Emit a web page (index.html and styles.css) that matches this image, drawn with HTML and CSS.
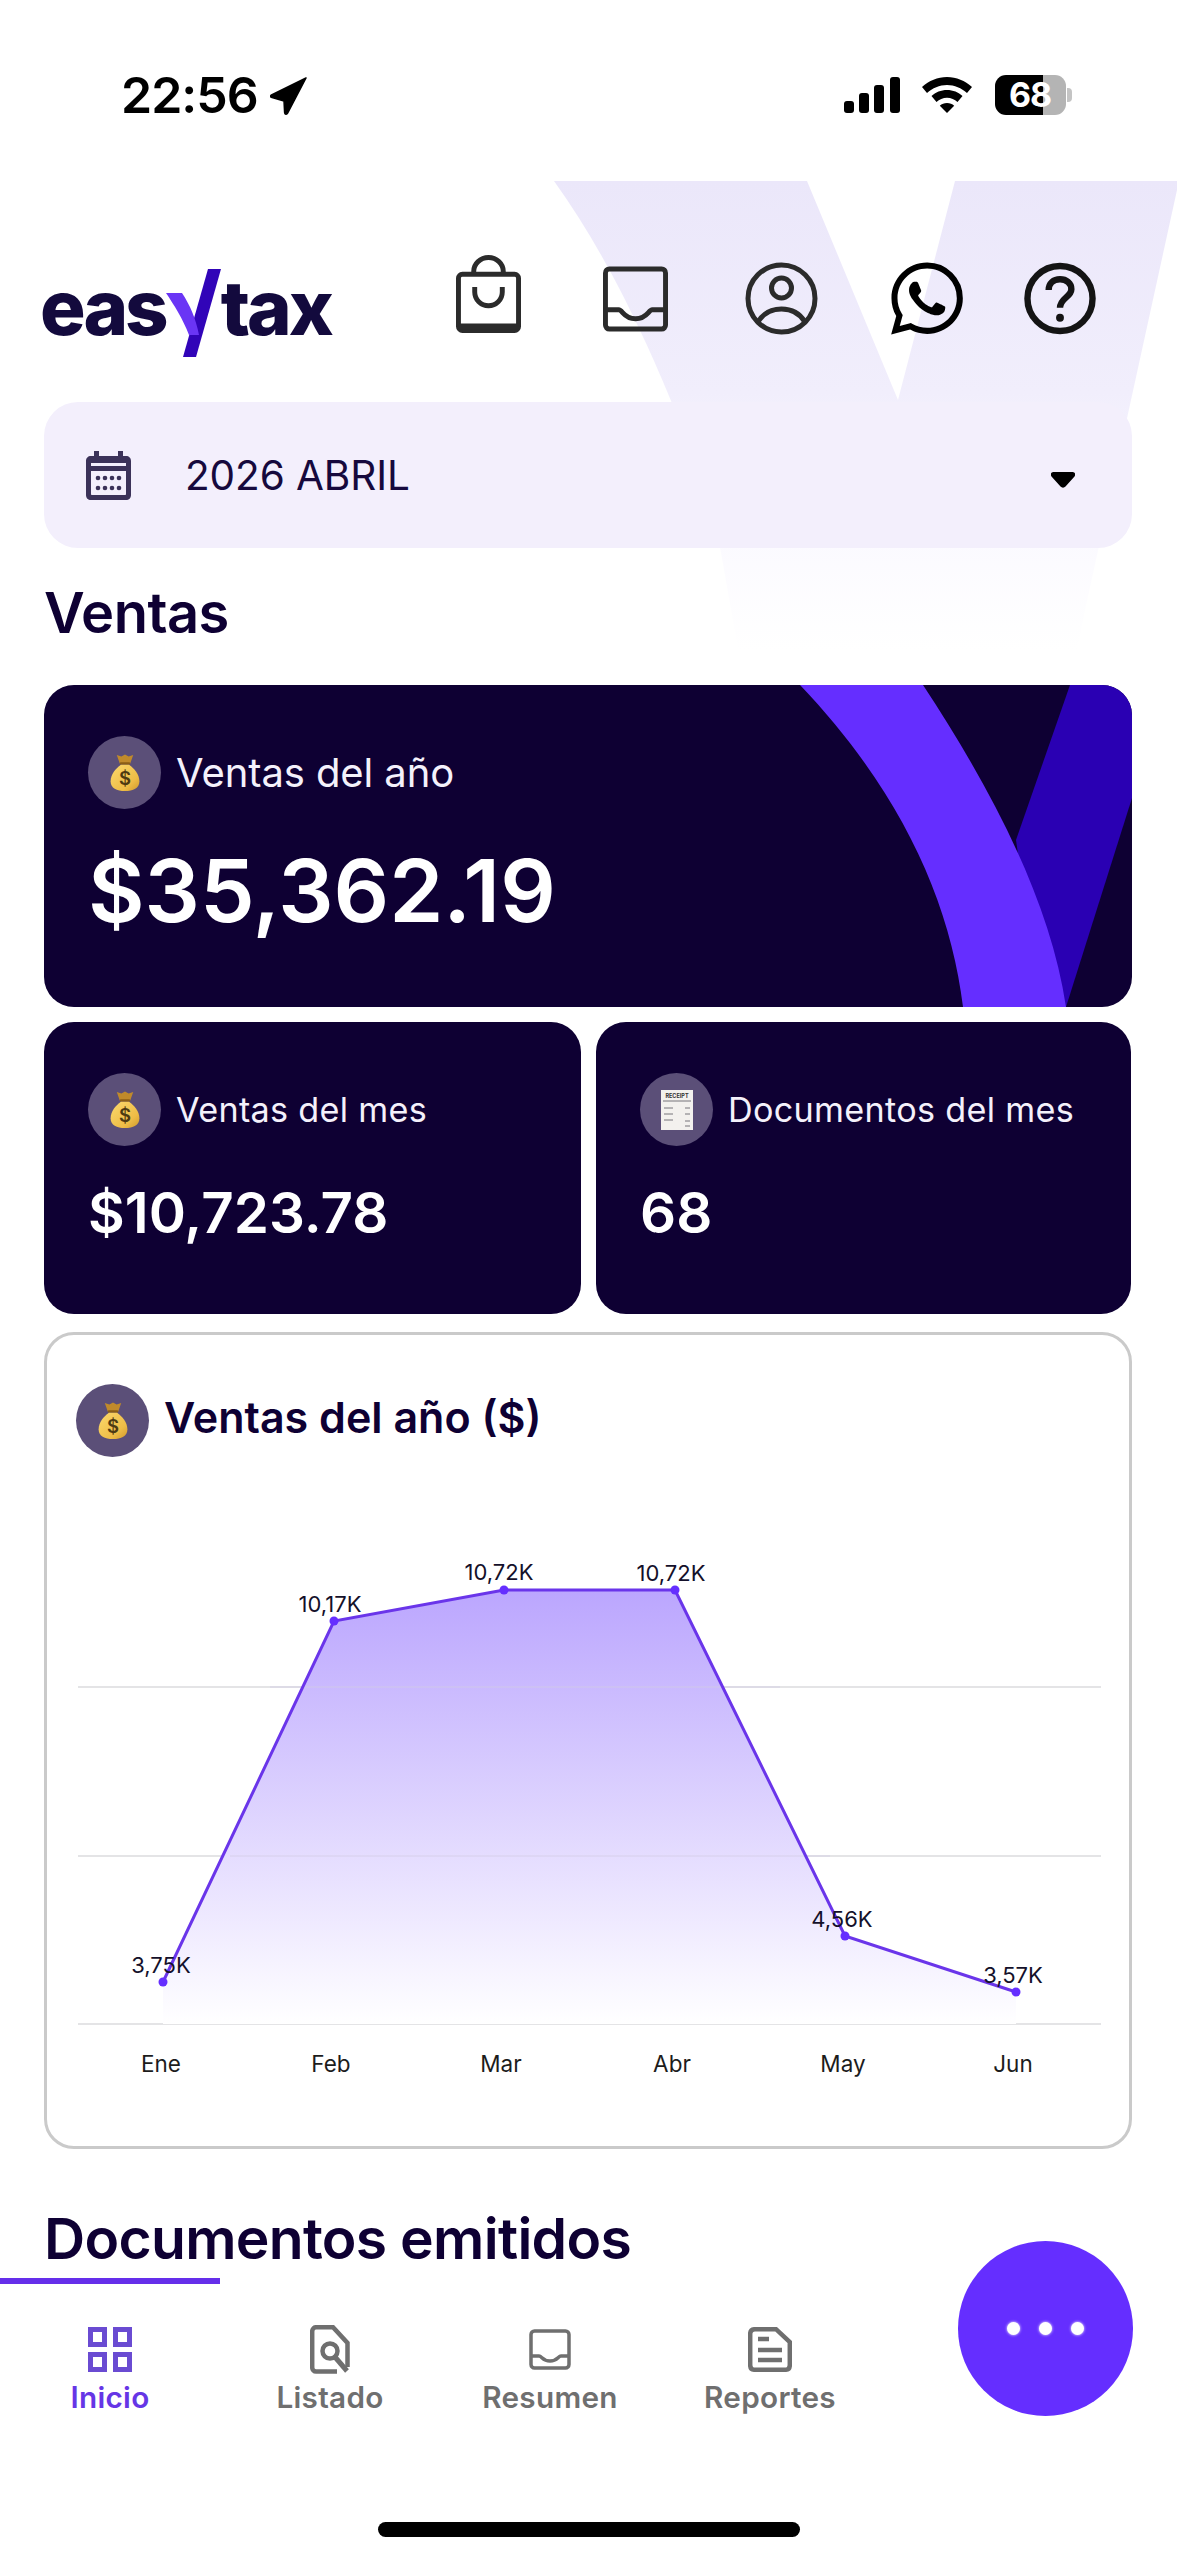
FILE: index.html
```html
<!DOCTYPE html>
<html lang="es">
<head>
<meta charset="utf-8">
<title>easytax</title>
<link rel="stylesheet" href="styles.css">
</head>
<body>
<svg class="defs" width="0" height="0" aria-hidden="true">
  <defs>
    <linearGradient id="bagfill" x1="0" y1="0" x2="1" y2="1">
      <stop offset="0" stop-color="#fbd96d"/><stop offset=".7" stop-color="#eebc46"/><stop offset="1" stop-color="#d09a2b"/>
    </linearGradient>
    <symbol id="moneybag" viewBox="0 0 28 36">
      <path d="M6 1l4.500 1.500L14 .5l3.500 2L22 1l-3 8.500H9z" fill="#c08a2a"/>
      <rect x="9" y="8" width="10" height="2.500" rx="1" fill="#8a5d16"/>
      <path d="M10 10.500h8c5 3.500 10 9.500 10 16 0 7-6 9.500-14 9.500S0 33.500 0 26.500c0-6.500 5-12.500 10-16z" fill="url(#bagfill)"/>
      <text x="14" y="30.500" text-anchor="middle" class="bag-sign">$</text>
    </symbol>
    <linearGradient id="wm" gradientUnits="userSpaceOnUse" x1="0" y1="181" x2="0" y2="650">
      <stop offset="0" stop-color="#ebe7fa"/>
      <stop offset=".45" stop-color="#f1eefc"/>
      <stop offset=".77" stop-color="#fbfaff"/>
      <stop offset="1" stop-color="#ffffff"/>
    </linearGradient>
    <linearGradient id="area" gradientUnits="userSpaceOnUse" x1="0" y1="1590" x2="0" y2="2024">
      <stop offset="0" stop-color="#bba6fe"/>
      <stop offset="1" stop-color="#ffffff"/>
    </linearGradient>
  </defs>
</svg>

<div class="screen">
  <svg class="watermark" width="1177" height="480" viewBox="0 181 1177 480" aria-hidden="true">
    <path fill="url(#wm)" d="M554 181H807L898 400L955 181H1177V190L1085 610L1075 660H740L717 530C700 470 640 300 554 181Z"/>
  </svg>

  <div class="status">
    <div class="status-left">
      <span class="time">22:56</span>
      <svg class="loc" width="38" height="38" viewBox="0 0 38 38"><path d="M36 1L1.500 18c-1.500.8-1 2.500.6 2.500L14 24l.6 11.500c.1 2 2.200 2.200 3 .6z" stroke="#000" stroke-width="1.500" stroke-linejoin="round"/></svg>
    </div>
    <div class="status-right">
      <svg width="56" height="36" viewBox="0 0 56 36"><rect x="0" y="24" width="10" height="12" rx="3"/><rect x="15" y="16" width="10" height="20" rx="3"/><rect x="30" y="8" width="10" height="28" rx="3"/><rect x="46" y="0" width="10" height="36" rx="3"/></svg>
      <svg class="wifi" width="50" height="36" viewBox="0 0 50 36"><path d="M25 0C15.500 0 7 3.800 0 10l5 6c5.500-5 12.500-8 20-8s14.500 3 20 8l5-6C43 3.800 34.500 0 25 0z"/><path d="M25 13c-6 0-11.500 2.300-15.500 6l5 6c2.800-2.600 6.500-4.200 10.500-4.200s7.700 1.600 10.500 4.200l5-6c-4-3.700-9.500-6-15.500-6z"/><path d="M25 26c-2.800 0-5.300 1-7.200 2.700L25 36l7.200-7.300C30.300 27 27.800 26 25 26z"/></svg>
      <div class="battery"><span class="battery-num">68</span></div>
      <span class="battery-nub"></span>
    </div>
  </div>

  <div class="content">
    <header class="topbar">
      <div class="logo">
        <span class="logo-text">eas</span>
        <svg class="logo-y" width="56" height="90" viewBox="0 0 56 90" aria-label="y">
          <path fill="#3104b8" d="M42 0H55L30 88H17z"/>
          <path fill="#6a35f5" d="M0 24H16C24 36 30 50 33 66H23C17 50 8 36 0 24z"/>
        </svg>
        <span class="logo-text logo-tax">tax</span>
      </div>
      <nav class="top-icons">
        <svg class="ti ti-bag" width="65" height="80" viewBox="0 0 66 80" fill="none" stroke="#2b2b2b" stroke-width="5"><rect x="2.500" y="20" width="61" height="57" rx="4"/><path d="M3 73h60" stroke-width="6"/><path d="M18 20v-3a15 14 0 0 1 30 0v3"/><path d="M19 33v5a14 14 0 0 0 28 0v-5"/></svg>
        <svg class="ti ti-tray" width="65" height="66" viewBox="0 0 66 66" fill="none" stroke="#2b2b2b" stroke-width="5"><rect x="2.500" y="2.500" width="61" height="61" rx="4"/><path d="M3 44h13c4 0 5 9 17 9s13-9 17-9h13"/></svg>
        <svg class="ti ti-user" width="73" height="73" viewBox="0 0 73 73" fill="none" stroke="#2b2b2b" stroke-width="5"><circle cx="36.500" cy="36.500" r="33.500"/><circle cx="36.500" cy="26" r="10"/><path d="M13 60c6-10 14-13 23.500-13S54 50 60 60"/></svg>
        <svg class="ti ti-wa" width="72" height="73" viewBox="0 0 24 24"><path d="M17.472 14.382c-.297-.149-1.758-.867-2.030-.967-.273-.099-.471-.148-.67.150-.197.297-.767.966-.94 1.164-.173.199-.347.223-.644.075-.297-.150-1.255-.463-2.390-1.475-.883-.788-1.480-1.761-1.653-2.059-.173-.297-.018-.458.130-.606.134-.133.298-.347.446-.520.149-.174.198-.298.298-.497.099-.198.050-.371-.025-.520-.075-.149-.669-1.612-.916-2.207-.242-.579-.487-.500-.669-.510-.173-.008-.371-.010-.570-.010-.198 0-.520.074-.792.372-.272.297-1.040 1.016-1.040 2.479 0 1.462 1.065 2.875 1.213 3.074.149.198 2.096 3.200 5.077 4.487.709.306 1.262.489 1.694.625.712.227 1.360.195 1.871.118.571-.085 1.758-.719 2.006-1.413.248-.694.248-1.289.173-1.413-.074-.124-.272-.198-.570-.347m-5.421 7.403h-.004a9.870 9.870 0 01-5.031-1.378l-.361-.214-3.741.982.998-3.648-.235-.374a9.860 9.860 0 01-1.510-5.260c.001-5.450 4.436-9.884 9.888-9.884 2.640 0 5.122 1.030 6.988 2.898a9.825 9.825 0 012.893 6.994c-.003 5.450-4.437 9.884-9.885 9.884m8.413-18.297A11.815 11.815 0 0012.050 0C5.495 0 .160 5.335.157 11.892c0 2.096.547 4.142 1.588 5.945L.057 24l6.305-1.654a11.882 11.882 0 005.683 1.448h.005c6.554 0 11.890-5.335 11.893-11.893a11.821 11.821 0 00-3.480-8.413z"/></svg>
        <svg class="ti ti-help" width="72" height="73" viewBox="0 0 73 73" fill="none" stroke="#141414" stroke-width="6.500"><circle cx="36.500" cy="36.500" r="33"/><path d="M25 28c0-7 5-11 11.500-11S48 21 48 27c0 8-11.500 9-11.500 19"/><circle cx="36.500" cy="56" r="4" fill="#141414" stroke="none"/></svg>
      </nav>
    </header>

    <div class="period">
      <svg class="cal" width="45" height="49" viewBox="0 0 45 49"><path fill="#3b3259" fill-rule="evenodd" d="M8 0h5v5h19V0h5v5h3c3 0 5 2 5 5v34c0 3-2 5-5 5H5c-3 0-5-2-5-5V10c0-3 2-5 5-5h3zM5 20v23c0 .6.400 1 1 1h33c.6 0 1-.400 1-1V20zM5 12v3h35v-3z"/><g fill="#3b3259"><circle cx="12" cy="27" r="2.300"/><circle cx="19" cy="27" r="2.300"/><circle cx="26" cy="27" r="2.300"/><circle cx="33" cy="27" r="2.300"/><circle cx="12" cy="37" r="2.300"/><circle cx="19" cy="37" r="2.300"/><circle cx="26" cy="37" r="2.300"/><circle cx="33" cy="37" r="2.300"/></g></svg>
      <span class="period-text">2026 ABRIL</span>
      <svg class="caret" width="24" height="16" viewBox="0 0 24 16"><path d="M3 0h18c3 0 4 2 2.500 4.500L14.500 14.500c-1.300 1.500-3.700 1.500-5 0L.5 4.500C-1 2 0 0 3 0z"/></svg>
    </div>

    <h2 class="section-title ventas-title">Ventas</h2>

    <section class="card card-hero">
      <svg class="hero-art" width="1088" height="322" viewBox="44 685 1088 322" aria-hidden="true">
        <path fill="#2a00b3" d="M1070 685H1132V798L1066 1007H1040L1016 840z"/>
        <path fill="#652eff" d="M800 685H923C992 790 1050 900 1066 1007H963C950 900 900 790 800 685z"/>
      </svg>
      <div class="stat-label-row">
        <span class="badge"><svg width="30" height="37"><use href="#moneybag"/></svg></span>
        <span class="stat-label">Ventas del año</span>
      </div>
      <div class="stat-value stat-value-lg">$35,362.19</div>
    </section>

    <div class="card-pair">
      <section class="card card-small">
        <div class="stat-label-row">
          <span class="badge"><svg width="30" height="37"><use href="#moneybag"/></svg></span>
          <span class="stat-label stat-label-sm">Ventas del mes</span>
        </div>
        <div class="stat-value">$10,723.78</div>
      </section>
      <section class="card card-small">
        <div class="stat-label-row">
          <span class="badge">
            <svg width="32" height="40" viewBox="0 0 32 40"><rect width="32" height="40" fill="#f3f1ee"/><text x="16" y="8" text-anchor="middle" class="receipt-head">RECEIPT</text><g stroke="#77757a" stroke-width="1"><path d="M2 11h28"/><path d="M3 18h9M24 18h5M3 24h9M24 24h5M3 30h9M24 31h5M24 36h5"/></g></svg>
          </span>
          <span class="stat-label stat-label-sm">Documentos del mes</span>
        </div>
        <div class="stat-value">68</div>
      </section>
    </div>

    <section class="chart-card">
      <div class="chart-head">
        <span class="badge"><svg width="30" height="37"><use href="#moneybag"/></svg></span>
        <h3 class="chart-title">Ventas del año ($)</h3>
      </div>
      <svg class="chart" width="1082" height="600" viewBox="47 1517 1082 600" role="img">
        <g stroke="#e4e4e6" stroke-width="2"><path d="M78 1687H1101M78 1856H1101M78 2024H1101"/></g>
        <path fill="url(#area)" d="M163 1982L334 1621L504 1590H675L845 1936L1016 1992V2024H163Z"/>
        <g stroke="#d4cde6" stroke-width="1.500" opacity=".5"><path d="M270 1687H780M230 1856H830"/></g>
        <polyline fill="none" stroke="#6a35ea" stroke-width="3" points="163,1982 334,1621 504,1590 675,1590 845,1936 1016,1992"/>
        <g fill="#652eff"><circle cx="163" cy="1982" r="4.500"/><circle cx="334" cy="1621" r="4.500"/><circle cx="504" cy="1590" r="4.500"/><circle cx="675" cy="1590" r="4.500"/><circle cx="845" cy="1936" r="4.500"/><circle cx="1016" cy="1992" r="4.500"/></g>
        <g class="chart-val" text-anchor="middle">
          <text x="161" y="1973">3,75K</text><text x="330" y="1612">10,17K</text><text x="499" y="1580">10,72K</text><text x="671" y="1581">10,72K</text><text x="842" y="1927">4,56K</text><text x="1013" y="1983">3,57K</text>
        </g>
        <g class="chart-axis" text-anchor="middle">
          <text x="161" y="2072">Ene</text><text x="331" y="2072">Feb</text><text x="501" y="2072">Mar</text><text x="672" y="2072">Abr</text><text x="843" y="2072">May</text><text x="1013" y="2072">Jun</text>
        </g>
      </svg>
    </section>

    <h2 class="section-title docs-title">Documentos emitidos</h2>
  </div>

  <nav class="tabbar">
    <a class="tab tab-active">
      <span class="tab-icon"><svg width="44" height="45" viewBox="0 0 44 45" fill="none" stroke="#6a4bd2" stroke-width="5"><rect x="2.500" y="2.500" width="14" height="15"/><rect x="27.500" y="2.500" width="14" height="15"/><rect x="2.500" y="27.500" width="14" height="15"/><rect x="27.500" y="27.500" width="14" height="15"/></svg></span>
      <span class="tab-label">Inicio</span>
    </a>
    <a class="tab">
      <span class="tab-icon"><svg width="40" height="49" viewBox="0 0 40 49" fill="none" stroke="#6f6f6f" stroke-width="4.500"><path d="M27 46.500H6c-2 0-3.800-1.800-3.800-4V6.500C2.200 4 4 2.200 6 2.200h17L37.500 18v24"/><circle cx="20" cy="26" r="7.500"/><path d="M25 32l12 14" stroke-width="5"/></svg></span>
      <span class="tab-label">Listado</span>
    </a>
    <a class="tab">
      <span class="tab-icon"><svg width="42" height="41" viewBox="0 0 42 41" fill="none" stroke="#6f6f6f" stroke-width="3.500"><rect x="2" y="2" width="38" height="37" rx="3.500"/><path d="M2 27h8c3 0 3.500 5 11 5s8-5 11-5h8"/></svg></span>
      <span class="tab-label">Resumen</span>
    </a>
    <a class="tab">
      <span class="tab-icon"><svg width="44" height="45" viewBox="0 0 44 45" fill="none" stroke="#6f6f6f" stroke-width="4.500"><path d="M28 2.200H7C4 2.200 2.200 4 2.200 7v31c0 3 1.800 4.800 4.800 4.800h30c3 0 4.800-1.800 4.800-4.800V15z"/><path d="M10 12h11M10 23h24M10 33h24" stroke-width="4.500"/></svg></span>
      <span class="tab-label">Reportes</span>
    </a>
  </nav>

  <button class="fab" aria-label="Más"><i></i><i></i><i></i></button>
  <div class="home-bar"></div>
</div>
</body>
</html>
```

FILE: styles.css
```css
* { box-sizing: border-box; margin: 0; padding: 0; }
html, body { background: #fff; }
body { font-family: Inter, "Liberation Sans", sans-serif; color: #0e0033; }
.defs { position: absolute; }
.bag-sign { font: 600 18px Inter, sans-serif; fill: #4d3a12; }
.receipt-head { font: 700 5.500px Inter, sans-serif; fill: #333; }

.screen { position: relative; width: 1177px; height: 2560px; overflow: hidden; background: #fff; }
.watermark { position: absolute; left: 0; top: 181px; }

/* status bar */
.status { position: relative; height: 181px; display: flex; justify-content: space-between; padding: 75px 105px 0 121px; }
.status-left { display: flex; align-items: flex-start; gap: 12px; }
.time { font-size: 50px; font-weight: 600; line-height: 40px; color: #000; letter-spacing: -1px; }
.loc { display: block; margin-top: 2px; }
.status-right { display: flex; align-items: flex-start; }
.status-right svg { display: block; margin-top: 2px; }
.wifi { margin-left: 22px; }
.battery { margin-left: 23px; width: 71px; height: 40px; border-radius: 11px; background: linear-gradient(90deg, #000 0 48px, #b4b4b4 48px); text-align: left; padding-left: 14px; }
.battery-num { font-size: 34px; font-weight: 700; line-height: 40px; color: #fff; letter-spacing: -1px; }
.battery-nub { width: 5px; height: 14px; margin-top: 13px; margin-left: 1px; background: #c4c4c4; border-radius: 0 4px 4px 0; }

/* content */
.content { position: relative; padding: 0 45px 0 44px; }
.topbar { height: 221px; display: flex; justify-content: space-between; }
.logo { display: flex; align-items: flex-start; padding-top: 88px; height: 180px; }
.logo-text { font-size: 76px; font-weight: 800; line-height: 66px; letter-spacing: -3px; margin-top: 5px; color: #130a3d; margin-left: -4px; }
.logo-y { margin-left: 0; margin-right: -1px; display: block; flex: none; }
.logo-tax { margin-left: 0; }
.top-icons { display: flex; align-items: flex-start; padding: 73px 36px 0 0; }
.ti { display: block; flex: none; }
.ti-tray { margin: 12px 0 0 82px; }
.ti-user { margin: 8px 0 0 77px; }
.ti-wa { margin: 8px 0 0 73px; }
.ti-help { margin: 8px 0 0 61px; }

.period { height: 146px; background: #f3effc; border-radius: 34px; display: flex; align-items: center; padding: 0 57px 0 42px; position: relative; }
.cal { flex: none; }
.period-text { font-size: 40.500px; font-weight: 400; color: #16093d; margin-left: 54px; letter-spacing: -.1px; flex: 1; }
.caret { flex: none; margin-top: 10px; }

.section-title { font-weight: 600; font-size: 56px; line-height: 68px; color: #0e0033; letter-spacing: -.5px; }
.ventas-title { margin-top: 31px; margin-bottom: 38px; }

.card { position: relative; background: #0e0033; border-radius: 30px; color: #fff; overflow: hidden; }
.card-hero { height: 322px; padding: 51px 44px 0; }
.hero-art { position: absolute; left: 0; top: 0; }
.stat-label-row { position: relative; display: flex; align-items: center; gap: 15px; }
.badge { width: 73px; height: 73px; border-radius: 50%; background: #5b4f78; display: flex; align-items: center; justify-content: center; flex: none; }
.badge svg { display: block; }
.stat-label { font-size: 40px; color: #f4f1fb; letter-spacing: -.1px; white-space: nowrap; }
.stat-label-sm { font-size: 34.200px; letter-spacing: .3px; }
.stat-value { position: relative; font-size: 56.500px; font-weight: 600; line-height: 68px; margin-top: 33px; color: #fff; }
.stat-value-lg { font-size: 87px; line-height: 100px; margin-top: 32px; }

.card-pair { display: grid; grid-template-columns: 537px 535px; gap: 15px; margin-top: 15px; }
.card-small { height: 292px; padding: 51px 44px 0; }

.chart-card { height: 817px; margin-top: 18px; border: 3px solid #cacaca; border-radius: 30px; background: #fff; overflow: hidden; }
.chart-head { display: flex; align-items: center; gap: 15px; padding: 49px 0 0 29px; }
.chart-title { font-size: 43px; font-weight: 600; color: #0e0033; line-height: 60px; margin-top: -7px; }
.chart { display: block; margin-top: 60px; }
.chart-val text { font: 400 22px Inter, sans-serif; fill: #14102a; }
.chart-axis text { font: 400 22.500px Inter, sans-serif; fill: #1c1c1c; }

.docs-title { margin-top: 56px; font-size: 57px; letter-spacing: -.7px; }

/* bottom navigation */
.tabbar { position: absolute; left: 0; right: 0; bottom: 0; height: 282px; background: #fff; display: flex; align-items: flex-start; }
.tab { width: 220px; display: flex; flex-direction: column; align-items: center; border-top: 6px solid transparent; color: #6f6f6f; padding-top: 39px; }
.tab-active { border-top-color: #652eea; color: #6636e6; }
.tab-icon { height: 52px; display: flex; align-items: center; justify-content: center; }
.tab-icon svg { display: block; }
.tab-label { font-size: 29.700px; font-weight: 600; line-height: 40px; margin-top: 2px; letter-spacing: .3px; }

.fab { position: absolute; left: 958px; top: 2241px; width: 175px; height: 175px; border: 0; border-radius: 50%; background: #652eff; display: flex; align-items: center; justify-content: center; gap: 19px; }
.fab i { width: 13px; height: 13px; border-radius: 50%; background: #fff; box-shadow: 0 0 3px #fff; }
.home-bar { position: absolute; left: 378px; top: 2522px; width: 422px; height: 15px; border-radius: 8px; background: #000; }
```
